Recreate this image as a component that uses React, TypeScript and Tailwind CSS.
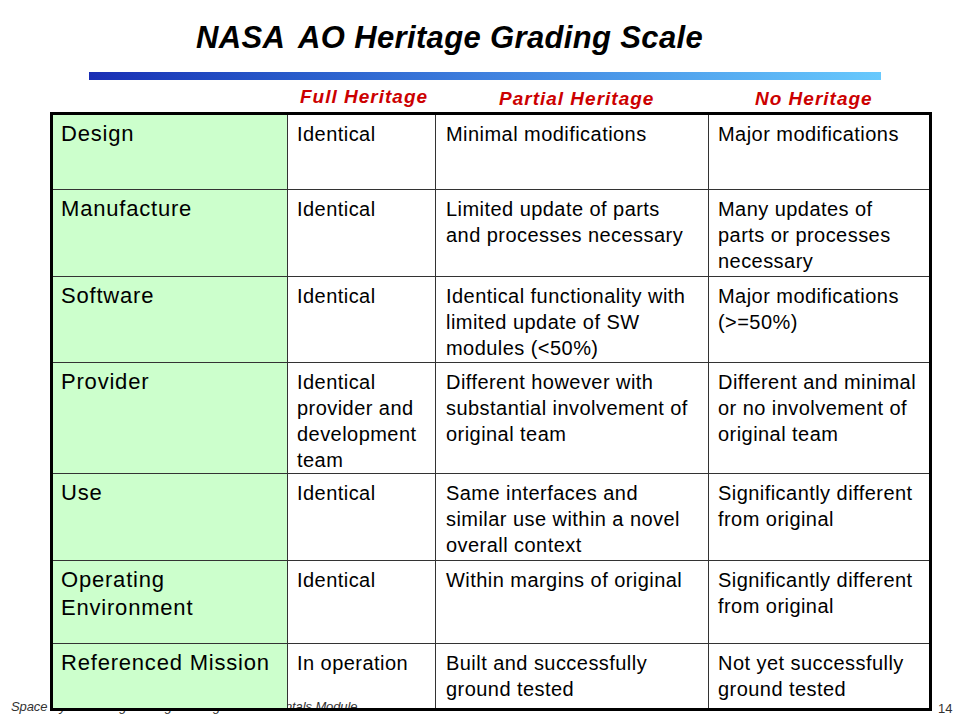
import React from "react";

type Row = { label: string; cells: string[] };

const rows: Row[] = [
  { label: "Design", cells: ["Identical", "Minimal modifications", "Major modifications"] },
  {
    label: "Manufacture",
    cells: [
      "Identical",
      "Limited update of parts and processes necessary",
      "Many updates of parts or processes necessary",
    ],
  },
  {
    label: "Software",
    cells: [
      "Identical",
      "Identical functionality with limited update of SW modules (<50%)",
      "Major modifications (>=50%)",
    ],
  },
  {
    label: "Provider",
    cells: [
      "Identical provider and development team",
      "Different however with substantial involvement of original team",
      "Different and minimal or no involvement of original team",
    ],
  },
  {
    label: "Use",
    cells: [
      "Identical",
      "Same interfaces and similar use within a novel overall context",
      "Significantly different from original",
    ],
  },
  {
    label: "Operating Environment",
    cells: ["Identical", "Within margins of original", "Significantly different from original"],
  },
  {
    label: "Referenced Mission",
    cells: ["In operation", "Built and successfully ground tested", "Not yet successfully ground tested"],
  },
];

const bodyPad = ["pl-[9px] pr-[8px]", "pl-[10px] pr-[15px]", "pl-[9px] pr-[8px]"];

export default function App() {
  return (
    <div className="relative w-[960px] h-[720px] overflow-hidden bg-white text-black font-['Liberation_Sans',Arial,sans-serif]">
      {/* footer behind the table */}
      <div className="absolute left-[11px] top-[700px] text-[13px] leading-[13px] italic tracking-[-0.1px] text-[#333] whitespace-nowrap">
        Space Systems Engineering: Heritage Fundamentals Module
      </div>
      <div className="absolute left-[938px] top-[702px] text-[13px] leading-[13px] text-[#333]">14</div>

      <div className="relative z-10 flex flex-col">
        <h1 className="ml-[196px] mt-[22px] text-[31px] leading-[31px] font-bold italic tracking-[0.35px] whitespace-nowrap">
          <span className="mr-[5px]">NASA</span> AO Heritage Grading Scale
        </h1>

        <div className="ml-[89px] mt-[19px] h-[8px] w-[792px] bg-linear-to-r from-[#1a2db4] via-[#3f80de] to-[#68c9fd]" />

        <div className="mt-[7px] flex items-start text-[19px] leading-[19px] font-bold italic tracking-[1px] text-[#cc0000] whitespace-nowrap">
          <div className="ml-[300px] w-[199px]">Full Heritage</div>
          <div className="mt-[2px] w-[256px]">Partial Heritage</div>
          <div className="mt-[2px]">No Heritage</div>
        </div>

        <div className="ml-[50px] mt-[4px] w-[882px] h-[599px] border-[3px] border-black grid grid-cols-[235px_148px_273px_220px] grid-rows-[75px_87px_86px_111px_87px_83px_64px]">
          {rows.map((r, ri) => {
            const last = ri === rows.length - 1;
            return (
              <React.Fragment key={r.label}>
                <div
                  className={`bg-[#ccffcc] border-r border-[#333] pl-[8px] pr-[2px] pt-[5px] text-[22px] leading-[28px] tracking-[0.8px] ${
                    last ? "" : "border-b"
                  }`}
                >
                  {r.label}
                </div>
                {r.cells.map((c, ci) => (
                  <div
                    key={ci}
                    className={`${bodyPad[ci]} pt-[6px] text-[20px] leading-[26px] tracking-[0.45px] border-[#333] ${
                      ci < 2 ? "border-r" : ""
                    } ${last ? "" : "border-b"}`}
                  >
                    {c}
                  </div>
                ))}
              </React.Fragment>
            );
          })}
        </div>
      </div>
    </div>
  );
}
